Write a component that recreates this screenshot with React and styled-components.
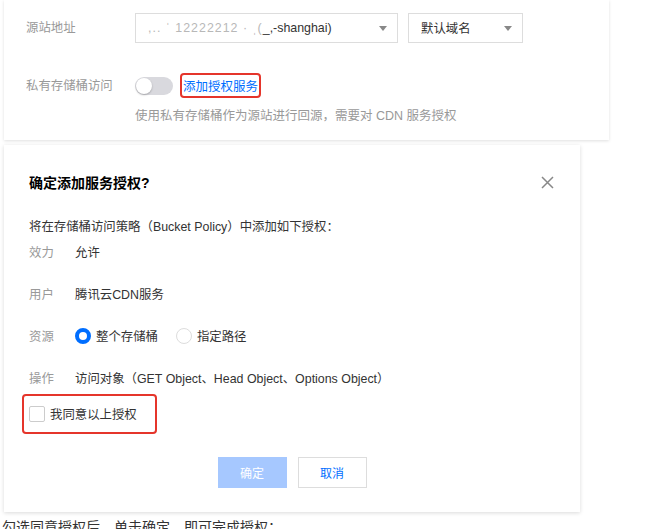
import styled, { createGlobalStyle } from "styled-components";

const GlobalStyle = createGlobalStyle`
  body {
    margin: 0;
    background: #fff;
    font-family: "Liberation Sans", "Noto Sans CJK SC", sans-serif;
    font-size: 12.4px;
    color: #333;
  }
`;

const Page = styled.div`
  padding-left: 4px;
  width: 657px;
  height: 529px;
  overflow: hidden;
  box-sizing: border-box;
`;

const Panel = styled.div`
  width: 605px;
  height: 140px;
  box-sizing: border-box;
  padding: 13px 0 0 22px;
  background: #fff;
  box-shadow: 0 1px 3px rgba(0, 0, 0, 0.13);
`;

const FormRow = styled.div`
  display: flex;
  align-items: center;
  height: ${(p) => p.h || 30}px;
  margin-top: ${(p) => p.mt || 0}px;
`;

const FormLabel = styled.div`
  width: 109px;
  flex: none;
  color: #999;
  line-height: 20px;
`;

const Select = styled.div`
  width: ${(p) => p.w}px;
  height: 30px;
  box-sizing: border-box;
  border: 1px solid #ddd;
  display: flex;
  align-items: center;
  justify-content: space-between;
  padding: 0 10px 0 12px;
  margin-right: 10px;
  color: #333;
`;

const Blur = styled.span`
  color: #b8b8b8;
  letter-spacing: 1px;
`;

const Arrow = styled.span`
  width: 0;
  height: 0;
  border-left: 4px solid transparent;
  border-right: 4px solid transparent;
  border-top: 5px solid #888;
`;

const Toggle = styled.div`
  position: relative;
  width: 38px;
  height: 18px;
  border-radius: 9px;
  background: #d9d9de;
  margin-right: 7px;

  &::after {
    content: "";
    position: absolute;
    left: 1px;
    top: 1px;
    width: 16px;
    height: 16px;
    border-radius: 50%;
    background: #fff;
    box-shadow: 0 1px 2px rgba(0, 0, 0, 0.25);
  }
`;

const Highlight = styled.div`
  border: 2px solid #e5352b;
  border-radius: 4px;
  box-sizing: border-box;
`;

const LinkBox = styled(Highlight)`
  height: 25px;
  display: flex;
  align-items: center;
  padding: 0 1px;
`;

const Link = styled.span`
  color: #006eff;
  font-size: 12.5px;
`;

const Helper = styled.div`
  margin-top: 10px;
  padding-left: 109px;
  color: #999;
  line-height: 17px;
  font-size: 12.5px;
`;

const Dialog = styled.div`
  margin-top: 5px;
  width: 576px;
  height: 367px;
  box-sizing: border-box;
  padding: 27px 0 24px 25px;
  background: #fff;
  box-shadow: 0 1px 4px rgba(0, 0, 0, 0.15);
  display: flex;
  flex-direction: column;
`;

const Header = styled.div`
  display: flex;
  align-items: center;
  justify-content: space-between;
  padding-right: 26px;
  height: 20px;
`;

const Title = styled.div`
  font-size: 14px;
  font-weight: bold;
  color: #000;
`;

const Desc = styled.div`
  margin-top: 25px;
  line-height: 20px;
  color: #333;
`;

const Details = styled.div`
  display: flex;
  flex-direction: column;
  gap: 22px;
  margin-top: 5px;
`;

const Detail = styled.div`
  display: flex;
  align-items: center;
  height: 20px;
`;

const DetailLabel = styled.span`
  width: 46px;
  flex: none;
  color: #999;
`;

const Radio = styled.span`
  width: 16px;
  height: 16px;
  box-sizing: border-box;
  border-radius: 50%;
  border: ${(p) => (p.checked ? "4px solid #006eff" : "1px solid #ddd")};
  margin-right: 5px;
`;

const RadioText = styled.span`
  margin-right: ${(p) => p.mr || 0}px;
`;

const AgreeBox = styled(Highlight)`
  margin: 6px 0 0 -7px;
  width: 135px;
  height: 40px;
  display: flex;
  align-items: center;
  padding-left: 5px;
`;

const Checkbox = styled.span`
  width: 16px;
  height: 16px;
  box-sizing: border-box;
  border: 1px solid #ccc;
  border-radius: 2px;
  margin-right: 5px;
`;

const Footer = styled.div`
  margin-top: auto;
  margin-left: -25px;
  display: flex;
  justify-content: center;
  gap: 11px;
`;

const Button = styled.button`
  width: 69px;
  height: 31px;
  font-family: inherit;
  font-size: 12px;
  border: 1px solid ${(p) => (p.primary ? "#a6c8ff" : "#ddd")};
  background: ${(p) => (p.primary ? "#a6c8ff" : "#fff")};
  color: ${(p) => (p.primary ? "#fff" : "#006eff")};
  padding: 0;
`;

const Caption = styled.div`
  margin: 5px 0 0 -2px;
  font-size: 14px;
  line-height: 20px;
  color: #333;
`;

function CloseIcon() {
  return (
    <svg width="13" height="13" viewBox="0 0 13 13">
      <path d="M1 1L12 12M12 1L1 12" stroke="#888" strokeWidth="1.5" fill="none" />
    </svg>
  );
}

export default function App() {
  return (
    <Page>
      <GlobalStyle />
      <Panel>
        <FormRow>
          <FormLabel>源站地址</FormLabel>
          <Select w={263}>
            <span>
              <Blur>,.. ˈ 12222212 · ˌ(</Blur>_,-shanghai)
            </span>
            <Arrow />
          </Select>
          <Select w={115}>
            <span>默认域名</span>
            <Arrow />
          </Select>
        </FormRow>
        <FormRow h={25} mt={30}>
          <FormLabel>私有存储桶访问</FormLabel>
          <Toggle />
          <LinkBox>
            <Link>添加授权服务</Link>
          </LinkBox>
        </FormRow>
        <Helper>使用私有存储桶作为源站进行回源，需要对 CDN 服务授权</Helper>
      </Panel>

      <Dialog>
        <Header>
          <Title>确定添加服务授权?</Title>
          <CloseIcon />
        </Header>
        <Desc>将在存储桶访问策略（Bucket Policy）中添加如下授权：</Desc>
        <Details>
          <Detail>
            <DetailLabel>效力</DetailLabel>
            <span>允许</span>
          </Detail>
          <Detail>
            <DetailLabel>用户</DetailLabel>
            <span>腾讯云CDN服务</span>
          </Detail>
          <Detail>
            <DetailLabel>资源</DetailLabel>
            <Radio checked />
            <RadioText mr={18}>整个存储桶</RadioText>
            <Radio />
            <RadioText>指定路径</RadioText>
          </Detail>
          <Detail>
            <DetailLabel>操作</DetailLabel>
            <span>访问对象（GET Object、Head Object、Options Object）</span>
          </Detail>
        </Details>
        <AgreeBox>
          <Checkbox />
          <span>我同意以上授权</span>
        </AgreeBox>
        <Footer>
          <Button primary>确定</Button>
          <Button>取消</Button>
        </Footer>
      </Dialog>
      <Caption>勾选同意授权后，单击确定，即可完成授权：</Caption>
    </Page>
  );
}
